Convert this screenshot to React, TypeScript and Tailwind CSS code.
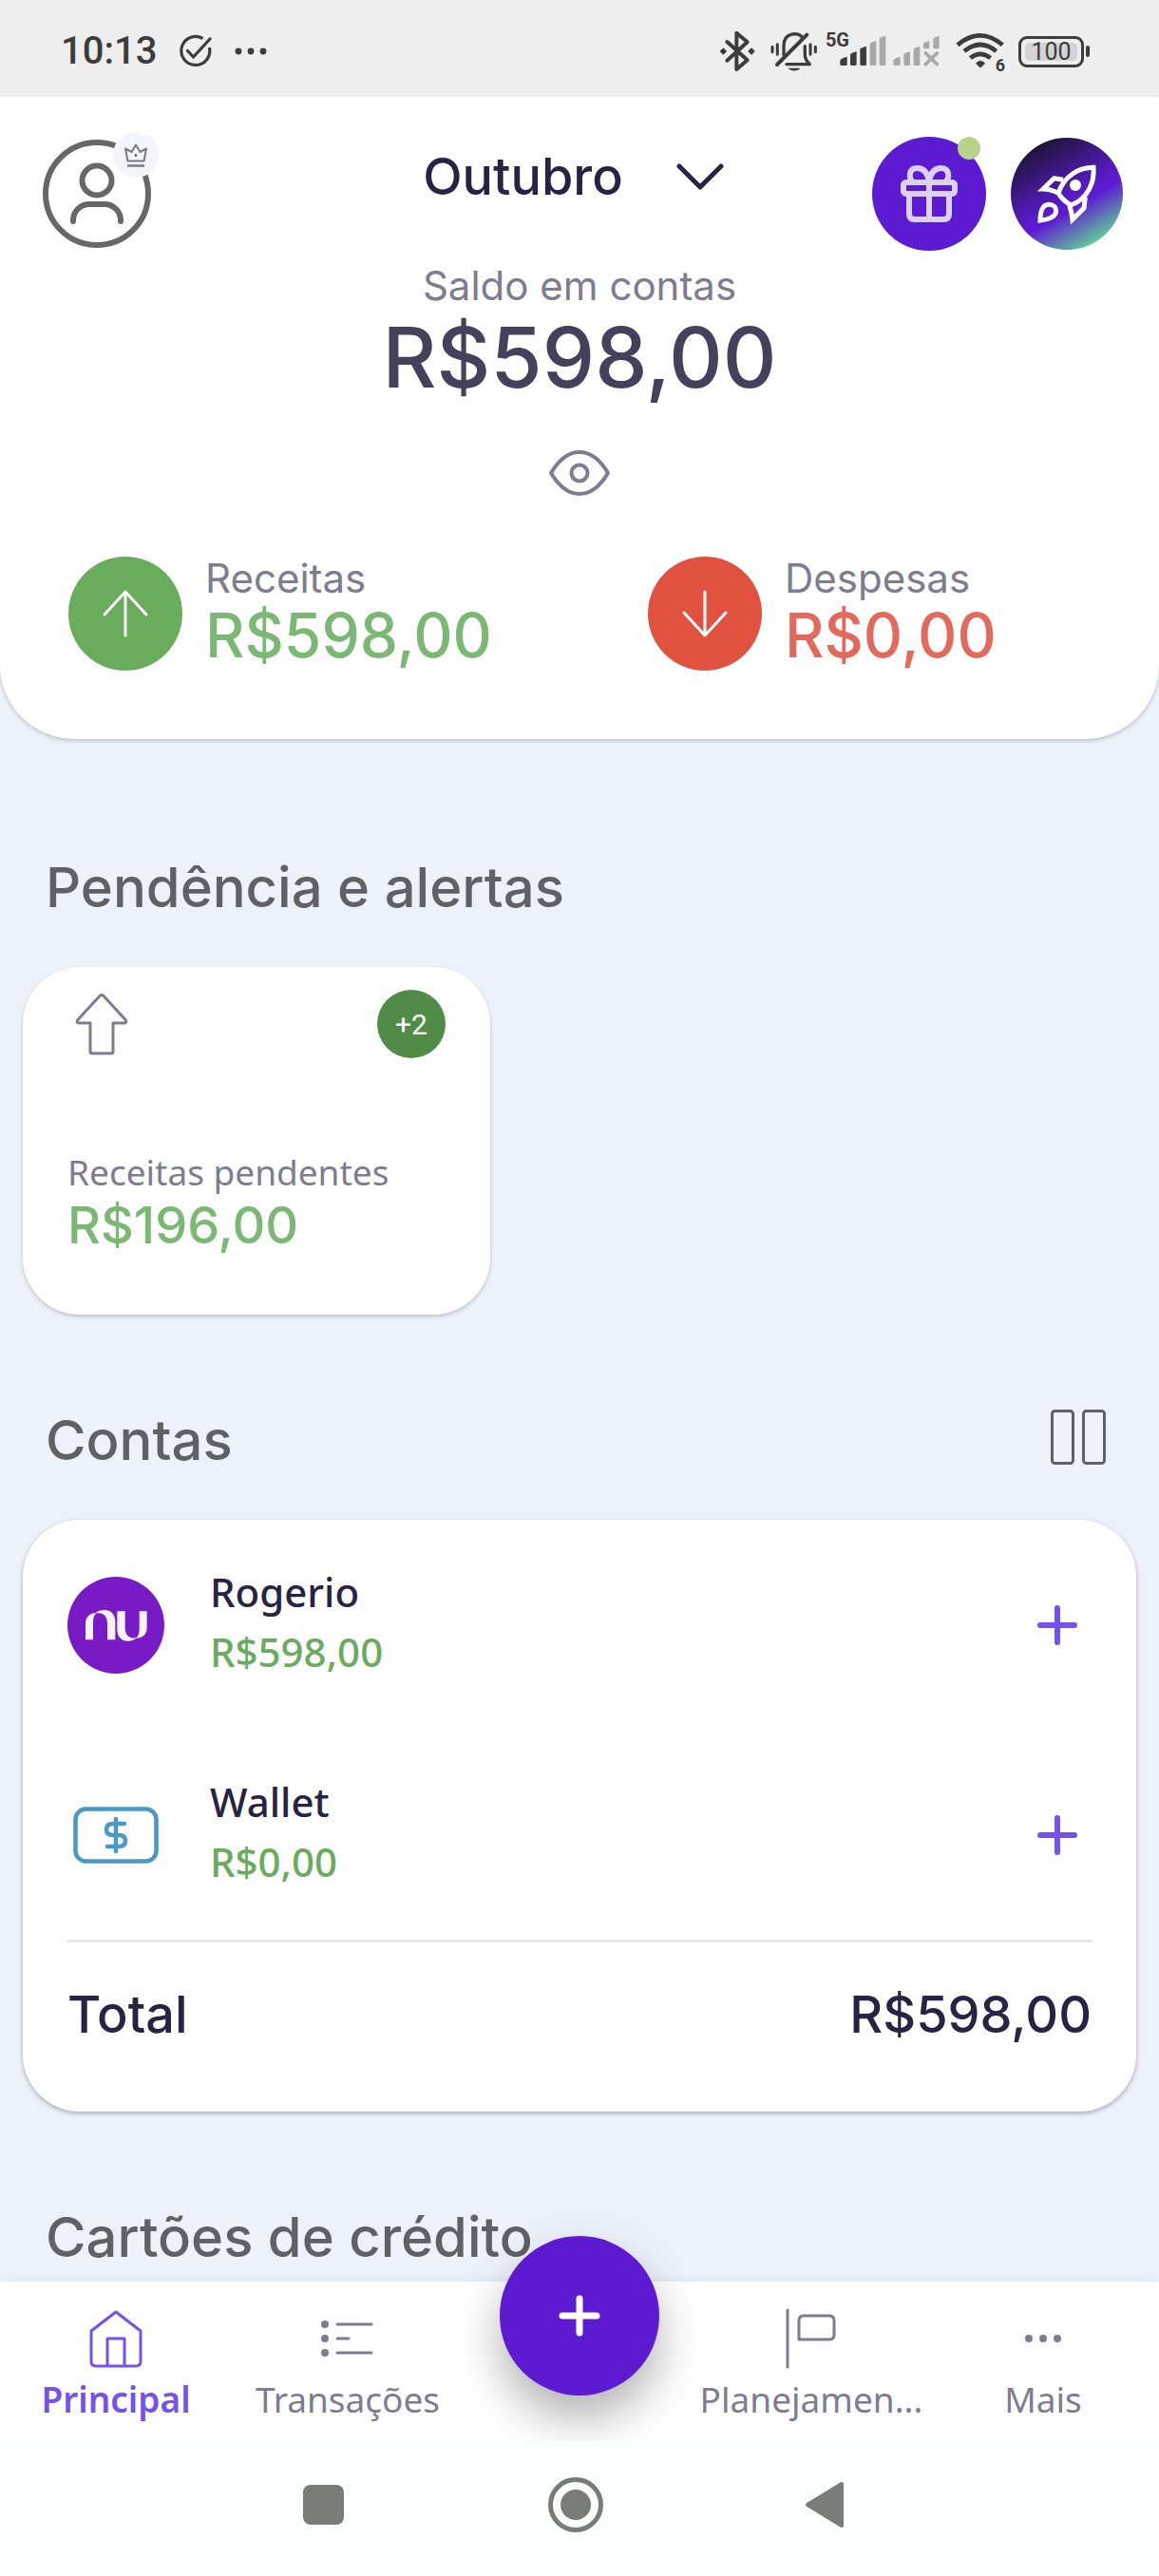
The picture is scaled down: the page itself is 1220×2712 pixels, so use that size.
import type { ReactNode } from "react";

const display = "font-['Inter',sans-serif]";
const body = "font-['Noto_Sans',sans-serif]";

function StatusBar() {
  return (
    <div className="flex h-[102px] items-center justify-between bg-[#eeeeee] pt-1.5 pr-[73px] pl-16 font-['Roboto',sans-serif] text-[#3c3c3c]">
      <div className="flex items-center gap-6">
        <span className="text-[40px] leading-[48px] font-medium">10:13</span>
        <svg width="34" height="38" viewBox="0 0 34 38" fill="none" stroke="currentColor" strokeWidth="3.2">
          <path d="M24.5 5.6A15 15 0 1 0 31.4 15" />
          <path d="M8.500 18.500l6 6.500L32 6" strokeLinecap="round" strokeLinejoin="round" />
        </svg>
        <svg width="34" height="10" viewBox="0 0 34 10" fill="currentColor">
          <circle cx="4" cy="5" r="3.4" />
          <circle cx="17" cy="5" r="3.4" />
          <circle cx="30" cy="5" r="3.4" />
        </svg>
      </div>
      <div className="flex items-center">
        <svg width="38" height="44" viewBox="20 34 114 132" fill="none" stroke="currentColor" strokeWidth="12" strokeLinecap="round" strokeLinejoin="round">
          <path d="M45 70l64 58-34 29V42l34 29-64 58" />
          <path d="M33 92l8 8-8 8-8-8zM122 92l8 8-8 8-8-8z" fill="currentColor" strokeWidth="5" />
        </svg>
        <svg className="ml-4" width="50" height="44" viewBox="182 34 150 132" fill="none" stroke="currentColor" strokeWidth="10" strokeLinecap="round" strokeLinejoin="round">
          <path d="M203 142L297 48" strokeWidth="12" />
          <path d="M224 112V82c0-42 48-44 58-26M233 141h73c-16-15-16-22-15-57" />
          <path d="M204 78v32M188 86v16M308 78v32M324 86v16" strokeWidth="9" />
          <path d="M238 153h38c-6 11-30 11-38 0z" fill="currentColor" stroke="none" />
        </svg>
        <span className="ml-2 self-start text-[20px] leading-[20px] font-bold">5G</span>
        <svg className="-ml-2.5" width="50" height="34" viewBox="400 54 150 102" fill="#a8a8a8">
          <g fill="#3c3c3c">
            <path d="M401 134q0-6 22-12v24q0 4-4 4h-14q-4 0-4-4z" />
            <path d="M433 114q6-5 20-8v40q0 4-4 4h-12q-4 0-4-4z" />
            <path d="M464 97q6-5 20-8v57q0 4-4 4h-12q-4 0-4-4z" />
          </g>
          <path d="M495 80q6-5 20-8v74q0 4-4 4h-12q-4 0-4-4z" />
          <path d="M525 64q6-5 20-8v90q0 4-4 4h-12q-4 0-4-4z" />
        </svg>
        <svg className="ml-1.5" width="50" height="34" viewBox="570 54 150 102" fill="#a8a8a8">
          <path d="M571 134q0-6 22-12v24q0 4-4 4h-14q-4 0-4-4z" />
          <path d="M604 114q6-5 20-8v40q0 4-4 4h-12q-4 0-4-4z" />
          <path d="M635 97q6-5 20-8v57q0 4-4 4h-12q-4 0-4-4z" />
          <path d="M666 80q6-5 19-8v21q0 4-4 4h-11q-4 0-4-4z" />
          <path d="M697 64q6-5 19-8v37q0 4-4 4h-11q-4 0-4-4z" />
          <path d="M673 111l36 35M709 111l-36 35" stroke="#a8a8a8" strokeWidth="11" strokeLinecap="round" />
        </svg>
        <div className="relative ml-4">
          <svg width="52" height="40" viewBox="766 44 156 120" fill="none" stroke="currentColor" strokeWidth="14">
            <path d="M772 84q72-60 142 0M793 104q51-42 101 0M812 125q31-25 64 0" />
            <path d="M830 142q14-14 28 0l-14 14z" fill="currentColor" strokeWidth="2" />
          </svg>
          <span className="absolute right-0 -bottom-1 text-[18px] leading-[18px] font-bold">6</span>
        </div>
        <div className="ml-3.5 flex h-[33px] w-[69px] items-center justify-center rounded-[9px] border-[3px] border-[#3c3c3c] p-1">
          <span className="flex h-full w-full items-center justify-center rounded-[5px] bg-[#d4d4d4] text-[25px] leading-none">100</span>
        </div>
        <div className="ml-0.5 h-3 w-1 rounded-full bg-[#3c3c3c]" />
      </div>
    </div>
  );
}

function Plus({ width = 6 }: { width?: number }) {
  return (
    <svg width="44" height="44" viewBox="0 0 44 44" fill="none" stroke="currentColor" strokeWidth={width} strokeLinecap="round">
      <path d="M22 4v36M4 22h36" />
    </svg>
  );
}

function ProfileButton() {
  return (
    <button type="button" aria-label="Perfil" className="relative mt-[3px] block h-[114px] w-[114px]">
      <svg width="114" height="114" viewBox="0 0 114 114" fill="none" stroke="#676767" strokeWidth="6" strokeLinecap="round">
        <circle cx="57" cy="57" r="54" />
        <circle cx="57" cy="43" r="15.500" />
        <path d="M32 86v-2a17 17 0 0 1 17-16h16a17 17 0 0 1 17 16v2" />
      </svg>
      <span className="absolute -top-2 -right-2 flex h-12 w-12 items-center justify-center rounded-full bg-[#f4f5fb]">
        <svg width="28" height="28" viewBox="0 0 28 28" fill="none" stroke="#7b7b80" strokeWidth="2" strokeLinejoin="round">
          <path d="M5.500 20.500L3 7.500l6.500 3.500L14 3.500l4.500 7.500L25 7.500l-2.500 13z" />
          <path d="M5 25.500h18" strokeWidth="2.500" />
          <circle cx="14" cy="14.500" r="1.300" fill="#444" stroke="none" />
        </svg>
      </span>
    </button>
  );
}

function GiftButton() {
  return (
    <button type="button" aria-label="Presentes" className="relative h-[120px] w-[120px] rounded-full bg-[#5d1bd1]">
      <svg width="120" height="120" viewBox="30 30 360 360" fill="none" stroke="#ddd0f5" strokeWidth="18">
        <rect x="129" y="174" width="162" height="36" rx="8" />
        <path d="M147 210v63q0 18 18 18h90q18 0 18-18v-63M210 170v121" />
        <path d="M158 172c-14-12-12-43 14-43 22 0 34 18 38 43 4-25 16-43 38-43 26 0 28 31 14 43" />
      </svg>
      <span className="absolute top-0 right-1.5 h-6 w-6 rounded-full bg-[#b8d28a]" />
    </button>
  );
}

function RocketButton() {
  return (
    <button
      type="button"
      aria-label="Novidades"
      className="h-[118px] w-[118px] rounded-full bg-[linear-gradient(150deg,#181428_8%,#5d1bd1_56%,#5d1bd1_60%,#5fd494_88%)]"
    >
      <svg width="118" height="118" viewBox="465 32 354 354" fill="none" stroke="#ffffff" strokeWidth="15">
        <path d="M726 126c-45 0-93 26-111 81q13 23 40 38c55-20 75-75 71-119z" />
        <path d="M630 165l-28-5-35 34q22 0 46 12M700 220l-4 34-36 36q-2-22-10-44" />
        <circle cx="669" cy="182" r="18" fill="#ffffff" stroke="none" />
        <path d="M558 293c0-28 8-50 27-50 15 0 23 10 23 20 0 19-25 28-50 30z" />
      </svg>
    </button>
  );
}

function Summary({ label, amount, circle, color, path }: { label: string; amount: string; circle: string; color: string; path: string }) {
  return (
    <div className="flex items-center gap-6 pl-[72px]">
      <span className={"flex h-[120px] w-[120px] shrink-0 items-center justify-center rounded-full " + circle}>
        <svg width="52" height="52" viewBox="0 0 52 52" fill="none" stroke="#ffffff" strokeWidth="3" strokeLinecap="round" strokeLinejoin="round">
          <path d={path} />
        </svg>
      </span>
      <div>
        <p className="text-[42px] leading-[46px] text-[#7e7c8f]">{label}</p>
        <p className={"text-[64px] leading-[74px] font-medium " + color}>{amount}</p>
      </div>
    </div>
  );
}

function Header() {
  return (
    <header className={"rounded-b-[78px] bg-white pt-[42px] pb-[72px] shadow-[0_2px_4px_rgba(0,0,0,0.2)] " + display}>
      <div className="grid grid-cols-[1fr_auto_1fr] items-start pr-[38px] pl-[45px]">
        <ProfileButton />
        <button type="button" className="mt-2.5 mr-5 flex items-center gap-14 text-[#282344]">
          <span className="text-[54px] leading-[64px] font-medium">Outubro</span>
          <svg width="50" height="30" viewBox="0 0 50 30" fill="none" stroke="currentColor" strokeWidth="5" strokeLinecap="round" strokeLinejoin="round">
            <path d="M3 4l22 22L47 4" />
          </svg>
        </button>
        <div className="flex items-center justify-end gap-[26px]">
          <GiftButton />
          <RocketButton />
        </div>
      </div>
      <div className="mt-3 flex flex-col items-center">
        <p className="text-[42px] leading-[50px] text-[#7e7c8f]">Saldo em contas</p>
        <p className="text-[88px] leading-[100px] font-medium text-[#45405b]">R$598,00</p>
        <button type="button" aria-label="Ocultar valores" className="mt-10">
          <svg width="64" height="64" viewBox="0 0 64 64" fill="none" stroke="#7e7c8f" strokeWidth="4" strokeLinejoin="round">
            <path d="M2 32Q15 10 32 10t30 22Q49 54 32 54T2 32z" />
            <circle cx="32" cy="32" r="8.500" />
          </svg>
        </button>
      </div>
      <div className="mt-14 grid grid-cols-2">
        <Summary label="Receitas" amount="R$598,00" circle="bg-[#68ac5c]" color="text-[#7ab874]" path="M26 49V4M4 27L26 3l22 24" />
        <Summary label="Despesas" amount="R$0,00" circle="bg-[#e05140]" color="text-[#e2695b]" path="M26 3v45M4 25l22 24 22-24" />
      </div>
    </header>
  );
}

function SectionTitle({ children }: { children: ReactNode }) {
  return <h2 className={"text-[58px] leading-[72px] font-medium text-[#606164] " + display}>{children}</h2>;
}

function PendingCard() {
  return (
    <article className="mt-12 ml-6 w-[492px] rounded-[60px] bg-white px-[47px] pt-6 pb-[62px] shadow-[0_2px_4px_rgba(0,0,0,0.2)]">
      <div className="flex items-center justify-between">
        <svg className="ml-2" width="56" height="68" viewBox="0 0 56 68" fill="none" stroke="#7e7c8f" strokeWidth="3" strokeLinejoin="round">
          <path d="M28 3.500q-1 0-2 1L3 29.500Q1 33 4 33h12v30q0 2 2 2h20q2 0 2-2V33h12q3 0 1-3.500l-23-25q-1-1-2-1z" />
        </svg>
        <span className="flex h-[72px] w-[72px] items-center justify-center rounded-full bg-[#508c45] font-['Roboto',sans-serif] text-[30px] text-white">+2</span>
      </div>
      <p className={"mt-24 text-[37px] leading-[48px] text-[#7e7c8f] " + body}>Receitas pendentes</p>
      <p className={"text-[54px] leading-[64px] font-medium text-[#7ab874] " + display}>R$196,00</p>
    </article>
  );
}

function NuLogo() {
  const n = (
    <>
      <path d="M90 222V170c0-20 14-33 35-33-8 8-11 16-11 30v55z" />
      <path d="M121 138c8-7 18-10 29-10 20 0 34 14 34 36v58h-25v-52c0-20-10-36-38-32z" />
    </>
  );
  return (
    <svg width="102" height="102" viewBox="33 23 306 306" fill="#f5f2fa">
      <circle cx="186" cy="176" r="153" fill="#781bc6" />
      {n}
      <g transform="rotate(180 187 177)">{n}</g>
    </svg>
  );
}

function WalletIcon() {
  return (
    <svg width="102" height="102" viewBox="0 0 102 102" fill="none" stroke="#4a98c4" strokeWidth="4.500" strokeLinecap="round">
      <rect x="8.500" y="23.500" width="85" height="55" rx="11" />
      <path d="M51 34v34M60 39H48q-7 0-7 6t7 6h6q7 0 7 6t-7 6H42" />
    </svg>
  );
}

const accounts = [
  { name: "Rogerio", amount: "R$598,00", icon: <NuLogo /> },
  { name: "Wallet", amount: "R$0,00", icon: <WalletIcon /> },
];

function AccountsCard() {
  return (
    <article className="mx-6 mt-12 rounded-[60px] bg-white px-[47px] pb-[70px] shadow-[0_2px_5px_rgba(0,0,0,0.3)]">
      <ul className="border-b-[3px] border-[#e8e8e8]">
        {accounts.map((a) => (
          <li key={a.name} className="flex h-[221px] items-center">
            {a.icon}
            <div className={"ml-12 flex-1 pb-2 text-[42px] leading-[63px] font-medium " + body}>
              <p className="text-[#282344]">{a.name}</p>
              <p className="text-[#6bab60]">{a.amount}</p>
            </div>
            <button type="button" aria-label={"Adicionar em " + a.name} className="flex h-[72px] w-[72px] items-center justify-center text-[#7552ee]">
              <Plus />
            </button>
          </li>
        ))}
      </ul>
      <div className={"mt-11 flex justify-between text-[54px] leading-[64px] font-medium text-[#282344] " + display}>
        <span>Total</span>
        <span>R$598,00</span>
      </div>
    </article>
  );
}

function NavItem({ label, active = false, children }: { label: string; active?: boolean; children: ReactNode }) {
  return (
    <a
      href="#"
      aria-current={active ? "page" : undefined}
      className={"flex flex-col items-center gap-2 pt-7 " + (active ? "font-semibold text-[#7552ee]" : "text-[#7e7c8f]")}
    >
      <svg width="64" height="64" viewBox="0 0 64 64" fill="none" stroke="currentColor" strokeWidth="3" strokeLinecap="round" strokeLinejoin="round">
        {children}
      </svg>
      <span className="text-[37px] leading-[48px]">{label}</span>
    </a>
  );
}

function BottomBar() {
  return (
    <footer className="sticky bottom-0 mt-auto">
      <nav className={"grid h-[168px] grid-cols-5 bg-white shadow-[0_-2px_10px_rgba(0,0,0,0.05)] " + body}>
        <NavItem label="Principal" active>
          <path d="M32 4L58 24v32q0 5-5 5H11q-5 0-5-5V24zM23 61V32h18v29" />
        </NavItem>
        <NavItem label="Transações">
          <path d="M21 17h36M21 32h12M21 47h36" />
          <g fill="currentColor" stroke="none">
            <circle cx="8" cy="17" r="4" />
            <circle cx="8" cy="32" r="4" />
            <circle cx="8" cy="47" r="4" />
          </g>
        </NavItem>
        <div className="relative">
          <button
            type="button"
            aria-label="Adicionar"
            className="absolute -top-12 left-1/2 flex h-[168px] w-[168px] -translate-x-1/2 items-center justify-center rounded-full bg-[#5d1bd1] text-white shadow-[0_24px_48px_rgba(0,0,0,0.3)]"
          >
            <Plus width={7} />
          </button>
        </div>
        <NavItem label="Planejamen...">
          <path d="M7 2v60M19 33V13q0-5 5-5h27q5 0 5 5v15q0 5-5 5z" />
        </NavItem>
        <NavItem label="Mais">
          <g fill="currentColor" stroke="none">
            <circle cx="17" cy="32" r="4" />
            <circle cx="32" cy="32" r="4" />
            <circle cx="47" cy="32" r="4" />
          </g>
        </NavItem>
      </nav>
      <div className="relative flex h-[142px] items-center justify-center gap-[200px] bg-[#fcfdfd] pr-2 pb-2">
        <button type="button" aria-label="Recentes">
          <svg width="64" height="64" viewBox="0 0 64 64" fill="#797b79">
            <rect x="9" y="11" width="43" height="42" rx="8" />
          </svg>
        </button>
        <button type="button" aria-label="Início">
          <svg width="64" height="64" viewBox="0 0 64 64" fill="none" stroke="#797b79" strokeWidth="5">
            <circle cx="32" cy="32" r="26.500" />
            <circle cx="32" cy="32" r="16" fill="#797b79" stroke="none" />
          </svg>
        </button>
        <button type="button" aria-label="Voltar">
          <svg width="64" height="64" viewBox="0 0 64 64" fill="#797b79" stroke="#797b79" strokeWidth="4" strokeLinejoin="round">
            <path d="M12 32l36-22v44z" />
          </svg>
        </button>
      </div>
    </footer>
  );
}

export default function App() {
  return (
    <div className="flex min-h-screen flex-col bg-[#edf2fa]">
      <StatusBar />
      <Header />
      <main className="pb-2">
        <section className="pt-[120px]">
          <div className="px-12">
            <SectionTitle>Pendência e alertas</SectionTitle>
          </div>
          <PendingCard />
        </section>
        <section className="pt-24">
          <div className="flex items-center justify-between pr-[55px] pl-12">
            <SectionTitle>Contas</SectionTitle>
            <button type="button" aria-label="Alternar visualização" className="pb-1.5">
              <svg width="60" height="60" viewBox="0 0 60 60" fill="none" stroke="#606164" strokeWidth="3">
                <rect x="2.500" y="2.500" width="22" height="55" rx="3" />
                <rect x="35.500" y="2.500" width="22" height="55" rx="3" />
              </svg>
            </button>
          </div>
          <AccountsCard />
        </section>
        <section className="px-12 pt-24">
          <SectionTitle>Cartões de crédito</SectionTitle>
        </section>
      </main>
      <BottomBar />
    </div>
  );
}
